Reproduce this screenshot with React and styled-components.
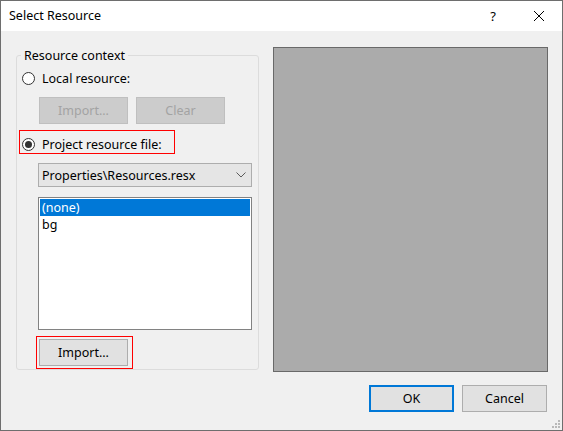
import React, { useState } from 'react';
import styled, { createGlobalStyle, css } from 'styled-components';

const GlobalStyle = createGlobalStyle`
  html, body {
    margin: 0;
    padding: 0;
    background: #ffffff;
  }
  body {
    font-family: "Noto Sans", "Liberation Sans", sans-serif;
    font-size: 12.5px;
    color: #000;
  }
  * {
    box-sizing: border-box;
  }
`;

const Window = styled.div`
  position: relative;
  width: 563px;
  height: 431px;
  border: 1px solid #6e6e6e;
  background: #f0f0f0;
  display: flex;
  flex-direction: column;
`;

const TitleBar = styled.div`
  height: 30px;
  background: #ffffff;
  display: flex;
  align-items: center;
  padding: 0 0 0 8px;
`;

const Title = styled.div`
  flex: 1;
  font-size: 12.5px;
  line-height: 16px;
`;

const TitleButton = styled.div`
  width: 46px;
  height: 30px;
  display: flex;
  align-items: center;
  justify-content: center;
  font-size: 13px;
  color: #000;
`;

const Body = styled.div`
  flex: 1;
  display: flex;
  flex-direction: column;
  padding: 16px 14px 18px 15px;
`;

const MainRow = styled.div`
  display: flex;
  gap: 14px;
  align-items: flex-start;
`;

const GroupBox = styled.fieldset`
  width: 243px;
  margin: 0;
  padding: 0 0 0 5px;
  border: 1px solid #dcdcdc;
  border-radius: 3px;
  display: flex;
  flex-direction: column;
  align-items: flex-start;
`;

const Legend = styled.legend`
  margin-left: -1px;
  padding: 0 3px;
  font-size: 12.5px;
  line-height: 17px;
`;

const RadioRow = styled.label`
  display: flex;
  align-items: center;
  gap: 7px;
  height: ${p => p.$h || 18}px;
  margin-top: ${p => p.$mt || 0}px;
  font-size: 12.5px;
`;

const RadioCircle = styled.span`
  width: 13px;
  height: 13px;
  border-radius: 50%;
  border: 1px solid #333333;
  background: #ffffff;
  display: flex;
  align-items: center;
  justify-content: center;
  &::after {
    content: '';
    display: ${p => (p.$checked ? 'block' : 'none')};
    width: 7px;
    height: 7px;
    border-radius: 50%;
    background: #333333;
  }
`;

const ButtonRow = styled.div`
  display: flex;
  gap: 8px;
  margin-top: ${p => p.$mt || 0}px;
  margin-left: ${p => p.$ml || 0}px;
`;

const Button = styled.button`
  width: ${p => p.$w || 89}px;
  height: 27px;
  padding: 0;
  font-family: inherit;
  font-size: 12.5px;
  border: 1px solid #adadad;
  background: #e1e1e1;
  color: #000;
  display: flex;
  align-items: center;
  justify-content: center;
  ${p => p.disabled && css`
    border-color: #bfbfbf;
    background: #cccccc;
    color: #a3a3a3;
  `}
  ${p => p.$default && css`
    border: 2px solid #0078d7;
  `}
`;

const Highlight = styled.div`
  border: 1px solid #ff0000;
  margin-top: ${p => p.$mt || 0}px;
  margin-left: ${p => p.$ml || 0}px;
  padding: ${p => p.$pad};
`;

const Combo = styled.div`
  width: 214px;
  height: 24px;
  margin: 9px 0 0 16px;
  border: 1px solid #adadad;
  background: #e5e5e5;
  display: flex;
  align-items: center;
  justify-content: space-between;
  padding: 0 5px 0 3px;
  font-size: 12.5px;
`;

const ListBox = styled.div`
  width: 214px;
  height: 133px;
  margin: 10px 0 0 16px;
  border: 1px solid #828282;
  background: #ffffff;
  padding: 1px 1px;
`;

const ListItem = styled.div`
  height: 17px;
  line-height: 17px;
  padding-left: 2px;
  font-size: 12.5px;
  ${p => p.$selected && css`
    background: #0078d7;
    color: #ffffff;
  `}
`;

const Preview = styled.div`
  width: 275px;
  height: 325px;
  background: #ababab;
  border: 1px solid #696969;
`;

const DialogButtons = styled.div`
  display: flex;
  justify-content: flex-end;
  gap: 8px;
  margin-top: 13px;
  padding-right: 1px;
`;

const Grip = styled.svg`
  position: absolute;
  right: 2px;
  bottom: 2px;
`;

const Chevron = () => (
  <svg width="10" height="6" viewBox="0 0 10 6">
    <polyline points="0.5,0.5 5,5 9.5,0.5" fill="none" stroke="#5a5a5a" strokeWidth="1" />
  </svg>
);

const CloseIcon = () => (
  <svg width="12" height="12" viewBox="0 0 12 12">
    <line x1="1" y1="1" x2="11" y2="11" stroke="#000" strokeWidth="1" />
    <line x1="11" y1="1" x2="1" y2="11" stroke="#000" strokeWidth="1" />
  </svg>
);

const items = ['(none)', 'bg'];

const App = () => {
  const [selected, setSelected] = useState(0);

  return (
    <>
      <GlobalStyle />
      <Window>
        <TitleBar>
          <Title>Select Resource</Title>
          <TitleButton>?</TitleButton>
          <TitleButton><CloseIcon /></TitleButton>
        </TitleBar>

        <Body>
          <MainRow>
            <GroupBox>
              <Legend>Resource context</Legend>

              <RadioRow $mt={5}>
                <RadioCircle />
                Local resource:
              </RadioRow>

              <ButtonRow $mt={10} $ml={17}>
                <Button disabled>Import...</Button>
                <Button disabled>Clear</Button>
              </ButtonRow>

              <Highlight $mt={6} $ml={-3} $pad="5px 12px 0 2px">
                <RadioRow $h={17}>
                  <RadioCircle $checked />
                  Project resource file:
                </RadioRow>
              </Highlight>

              <Combo>
                <span>Properties\Resources.resx</span>
                <Chevron />
              </Combo>

              <ListBox>
                {items.map((item, i) => (
                  <ListItem key={item} $selected={i === selected} onClick={() => setSelected(i)}>
                    {item}
                  </ListItem>
                ))}
              </ListBox>

              <Highlight $mt={6} $ml={14} $pad="2px 4px 2px 2px">
                <Button>Import...</Button>
              </Highlight>
            </GroupBox>

            <Preview />
          </MainRow>

          <DialogButtons>
            <Button $w={85} $default>OK</Button>
            <Button $w={85}>Cancel</Button>
          </DialogButtons>
        </Body>

        <Grip width="8" height="8" viewBox="0 0 8 8">
          <rect x="6" y="0" width="2" height="2" fill="#b8b8b8" />
          <rect x="3" y="3" width="2" height="2" fill="#b8b8b8" />
          <rect x="6" y="3" width="2" height="2" fill="#b8b8b8" />
          <rect x="0" y="6" width="2" height="2" fill="#b8b8b8" />
          <rect x="3" y="6" width="2" height="2" fill="#b8b8b8" />
          <rect x="6" y="6" width="2" height="2" fill="#b8b8b8" />
        </Grip>
      </Window>
    </>
  );
};

export default App;
